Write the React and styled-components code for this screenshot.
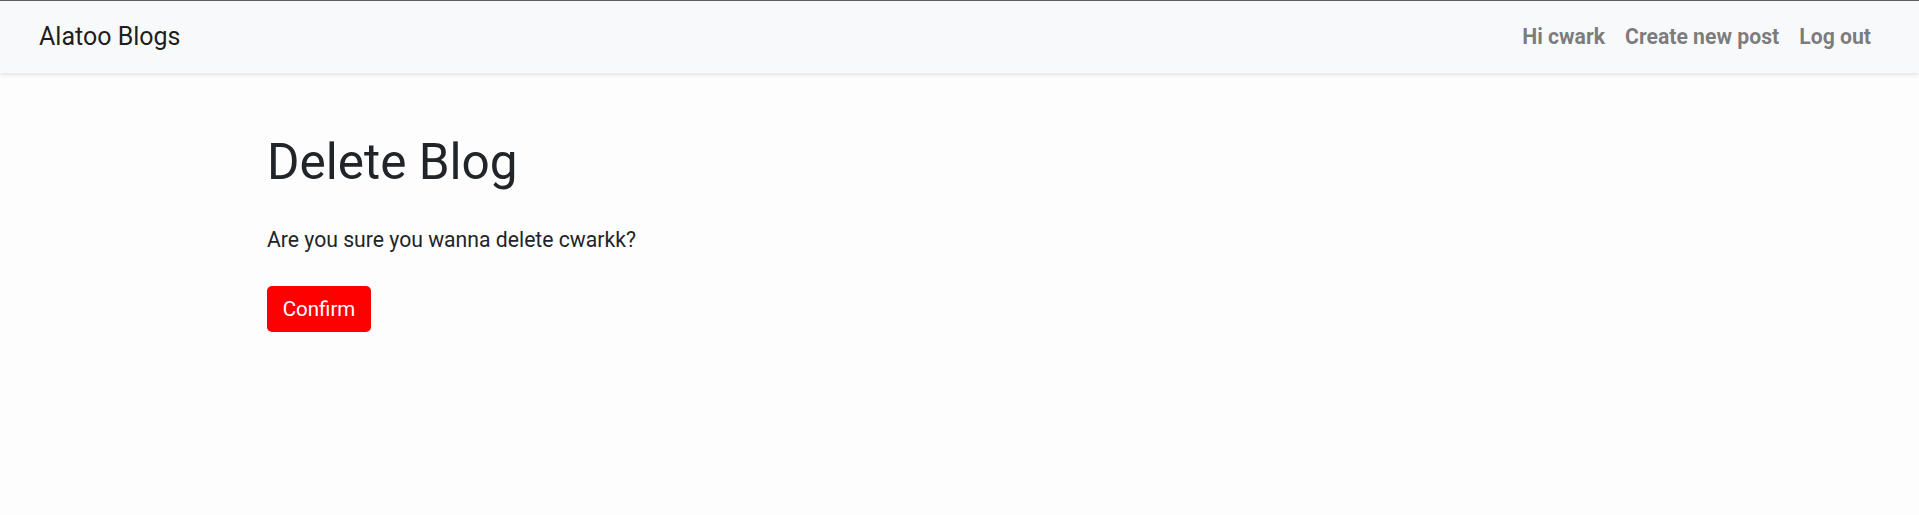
import React from "react";
import styled, { createGlobalStyle } from "styled-components";

const Global = createGlobalStyle`
  html, body { margin: 0; padding: 0; }
  body {
    background: #fdfdfd;
    font-family: Roboto, "Liberation Sans", Arial, sans-serif;
    color: #212529;
    min-height: 515px;
  }
`;

const Navbar = styled.nav`
  height: 72px;
  border-top: 1px solid #5c5c5c;
  background: #f8f9fa;
  box-shadow: 0 2px 4px rgba(0, 0, 0, 0.1);
  display: flex;
  align-items: center;
  justify-content: space-between;
  padding: 0 38px 0 39px;
`;

const Brand = styled.a`
  font-size: 25px;
  color: rgba(0, 0, 0, 0.9);
  text-decoration: none;
  line-height: 1;
  padding-bottom: 1px;
`;

const NavLinks = styled.div`
  display: flex;
  align-items: center;
`;

const NavLink = styled.a`
  font-size: 21.2px;
  font-weight: 700;
  color: rgba(0, 0, 0, 0.52);
  text-decoration: none;
  padding: 0 10px;
  line-height: 1;
  padding-bottom: 1px;
`;

const Main = styled.main`
  padding: 60px 0 0 267px;
`;

const Title = styled.h1`
  margin: 0 0 33px;
  font-size: 49.5px;
  font-weight: 400;
  line-height: 1.2;
  color: #212529;
`;

const Message = styled.p`
  margin: 0 0 31px;
  font-size: 21.2px;
  line-height: 1.4;
  color: #212529;
`;

const DangerButton = styled.button`
  background: #f00;
  color: #fff;
  border: none;
  border-radius: 5px;
  width: 104px;
  height: 46px;
  font-family: inherit;
  font-size: 20.5px;
  cursor: pointer;
`;

export default function App() {
  return (
    <>
      <Global />
      <Navbar>
        <Brand href="#">Alatoo Blogs</Brand>
        <NavLinks>
          <NavLink href="#">Hi cwark</NavLink>
          <NavLink href="#">Create new post</NavLink>
          <NavLink href="#">Log out</NavLink>
        </NavLinks>
      </Navbar>
      <Main>
        <Title>Delete Blog</Title>
        <Message>Are you sure you wanna delete cwarkk?</Message>
        <DangerButton>Confirm</DangerButton>
      </Main>
    </>
  );
}
